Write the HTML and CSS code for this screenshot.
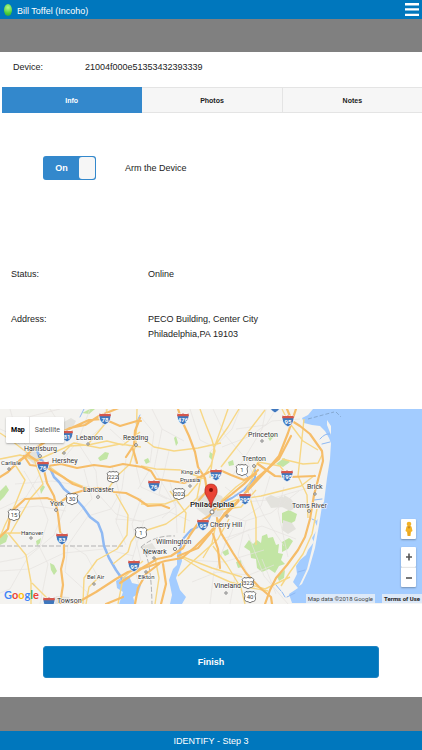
FILE: index.html
```html
<!DOCTYPE html>
<html lang="en">
<head>
  <meta charset="UTF-8">
  <meta name="viewport" content="width=device-width, initial-scale=1.0">
  <title>Identify - Step 3</title>
  <link rel="stylesheet" href="styles.css">
</head>
<body>
  <header class="header">
    <span class="status-dot"></span>
    <span class="user-name">Bill Toffel (Incoho)</span>
    <button class="menu-button" type="button" aria-label="Menu">
      <svg width="14" height="14" viewBox="0 0 14 14">
        <path d="M0 1.2h14M0 6.4h14M0 11.9h14" stroke="#fff" stroke-width="2.4"/>
      </svg>
    </button>
  </header>

  <main class="content">
    <div class="device-row">
      <span class="device-label">Device:</span>
      <span>21004f000e51353432393339</span>
    </div>

    <nav class="tabs">
      <button class="tab active" type="button">Info</button>
      <button class="tab" type="button">Photos</button>
      <button class="tab" type="button">Notes</button>
    </nav>

    <div class="arm-row">
      <label class="switch" for="arm">
        <input type="checkbox" id="arm" checked>
        <span class="switch-text">On</span>
        <span class="switch-knob"></span>
      </label>
      <label for="arm">Arm the Device</label>
    </div>

    <dl class="details">
      <dt>Status:</dt>
      <dd>Online</dd>
      <dt>Address:</dt>
      <dd>PECO Building, Center City<br>Philadelphia,PA 19103</dd>
    </dl>

    <section class="map" aria-label="Map">
      <svg class="map-canvas" viewBox="0 0 422 195" preserveAspectRatio="xMidYMid slice">
        <defs>
          <g id="interstate">
            <path d="M-5.5-5.5Q-3-4.500 0-5.500Q3-4.500 5.500-5.500Q7.500 2 0 6Q-7.500 2-5.500-5.500z" fill="#3f77bd" stroke="#fff" stroke-width=".8"/>
            <path d="M-5.500-5.500Q-3-4.500 0-5.500Q3-4.500 5.500-5.500L6-2.800H-6z" fill="#d5574c"/>
          </g>
          <g id="us-route">
            <path d="M-4-5.500Q-2-4.500 0-5.500Q2-4.500 4-5.500L5.800-3.500Q4.500-1 5.500 1Q6 4.500 2 4.700L0 5.800L-2 4.700Q-6 4.500-5.500 1Q-4.500-1-5.800-3.500z" fill="#fff" stroke="#555" stroke-width=".8"/>
          </g>
        </defs>

        <rect width="422" height="195" fill="#f4f3f0"/>

        <!-- parks -->
        <g fill="#c2e5a4">
          <path d="M0 82l6-6 3 5-5 7-4 4zM40 80l3-4 2 2-4 7zM98 49l7-6 4 1-2 6-7 2zM82 4l8-4 5 0-6 5zM36 132l5-3-1 5-3 3zM50 154l4 2 3 6-3 4-3-5z"/>
          <path d="M176 27l2 7-2 3-2-8zM144 51l4-2 2 4-4 2zM210 43l3 2-1 6-3-3zM228 53l5-2 1 5-5 1zM276 55l8-6 6 4-7 5zM268 29l5-5 3 1-6 7zM236 153l5-2 1 7-4 1z"/>
          <path d="M244 138l5-7 4 4 4-4 4 3 1-7 5-2 1 4 5-1 3 8 3-1-1 9 5 1-2 6 4 4-6 2-4 7-6-4-7 3-5-4-1-9-5-1-1-7zM282 104l7-3 8 4-2 7-7 4-6-2zM282 133l7-4 4 3-5 8-6 3zM277 167l8-6-1 8-5 3zM222 143l6-3 1 5-4 2zM0 125l5-3 3 5-2 6-6 3z"/>
        </g>

        <!-- built up areas and hills -->
        <g fill="#e3e2dd">
          <path d="M62 14l9-5 5 3-3 6-9 4zM265 89l6-3 7 3 4-2 5 5-4 6-12 1zM284 86l7 4 6 8-7 4-8-4zM283 111l9 3 4 6-8 5-6-4z"/>
          <path d="M24 46l8-7 7 4 5 8-10 4zM197 88l11-6 14 5 4 10-6 11-14-1-10-8zM140 138l12-4 4 6-8 7zM56 187l13 1 4 7H52z"/>
        </g>

        <!-- local roads -->
        <g fill="none" stroke="#e5e3e0" stroke-width=".7">
          <path d="M0 20l18 8 12 12M10 0l8 28M0 100l26-12 18-30M24 62l15 25 9 24-8 26-18 12-22 4M64 49l14-17 12-32M78 34l18 28 2 23 18 20 26 8M106 0l-4 18-13 11M110 20l22 20 9 38 26 12M141 8l13 16-4 30M152 0l10 20 22 12M162 20l-8 40 22 38 1 26M126 50l-4 30-11 20-23 7"/>
          <path d="M66 96l-12 30-26 22-18 32-10 4M38 135l10 20-8 40M0 162l30-2 34-16 40-4 30 7M88 107l-20 29-3 27 22 20-3 12M141 89l-9 26 9 37M115 110l28 2 27-9 20 9M144 111l-12 40 8 28-7 16"/>
          <path d="M213 0l12 26 22 25 7 17M240 0l-8 20-23 24M266 0l-4 20-18 30-12 17M276 0l-10 16-30 4M222 38l26-10 24-16 28-2M255 57l-5 20 14 30 20 30M270 67l-9 30-26 18-15 32M225 78l20 15 22-2 44-13M213 100l32 12 26-8 28-22M246 112l-8 34 12 23M222 130l40-13 34 13M188 151l36 2 40-12M192 173l25-10 32 3 25-10M210 195l4-33M230 195l5-28M288 195l-24-28-16-42"/>
          <path d="M14 28l14 20M50 0l15 23M20 10l40-10M0 50l24-4M15 75l37-3 38 6M84 60l8 30-22 24M112 57l9 34-5 22 10 23M8 100l30-3 28 5M70 136l16 10 14 26M150 60l-12 20M169 42l-10 43 20 10M170 73l6 24-14 12M190 0l10 31 16 8M250 120l-24 12-10 30M262 150l14 35M284 78l-6 24 10 46"/>
        </g>

        <path d="M0 137H123M141 138q14-12 34-11M141 138q10 7 11 57" fill="none" stroke="#aaa" stroke-width=".9" stroke-dasharray="5 2"/>

        <!-- water -->
        <g fill="#a3ccff">
          <path d="M313 0l-5 6-6 3 2 5 8 2 8 1 5 5 4 7 2 5-1 16-3 19-3 24-5 6 0 10-4 4 3 6-6 10 2 4-6 8-2 5-6 5-4 6 1 8-4 8 5 6-9 6 3 9H422V0z"/>
          <path d="M170 195l2-9-3-15 4-11 4-4 0-14 4-2 1 12-3 9-3 8 4 12 6 7-4 7z"/>
          <path d="M116 172l5-3 8-2 3 7 9 2-3 9-5 3 2 7H119l4-12-6-4z"/>
        </g>
        <g fill="none" stroke="#8fb9f3" stroke-linecap="round" stroke-linejoin="round">
          <path d="M37 41l3 9 10 9 4 9 5 5 5 7 11 9 8 9 7 10 8 6 4 10 2 13 5 12 7 12 7 10" stroke-width="2.500"/>
          <path d="M179 143l4-13 8-9 9-4 9-7 3-8 7-7 13-6 12-8 11-12 0-8" stroke-width="2"/>
          <path d="M320 30q5-6 10-5M322 35l8-2M313 76l9 1M314 91l8-1M312 110l4 2M298 163l7-2M287 188l8-4M84 0l-4 8M136 14l4-8M240 60l8 8M282 183l3 5M276 176l5 6" stroke-width="1"/>
        </g>
        <path d="M327 11l4 6 0 9-4-10zM322 97l-3 19-4 23-6 21-7 15-3 2 8-17 5-20 5-24 2-19z" fill="#f4f3f0"/>
        <path d="M308 10l26-7M336 3l5 5" fill="none" stroke="#789abd" stroke-width=".7" stroke-dasharray="4 2"/>

        <!-- secondary roads -->
        <g fill="none" stroke="#f7d785" stroke-width="1.400" stroke-linejoin="round">
          <path d="M0 50l20-4 15 5 9-3 20-9 10-5 26 5 20-4 21 3M0 24l12 8 18 14M62 45l8-8 18-1 19-4 16 4 17-13M106 83l11-16 13-12 6-20 1-35M107 0l-2 15-16 19M116 85l12 21-1 20-10 14-20 11-13 18-1 26"/>
          <path d="M14 54l11 17-10 25-10 20-5 12M8 124l18 22 5 27 0 22M32 174l21 21M4 124l24 0M34 50l9 25-13 15-20 35M43 53l25 18 20 9M141 28l13 10 20 4 24-3 23-5M200 0l4 11 8 20 3 11-4 14-8 12M228 0l-7 20-7 19-4 30M239 0l-11 18-14 20"/>
          <path d="M141 57l15 3 25 1 24 9M141 123l25-8 18-13 13-13 4-20M198 74l-10 12-23 9-24 0M170 82l16 22-2 20M258 53l-7 14-15 11-15 14M258 53l22 4 7 9M214 100l22-9 25-4 40-10 14-11M217 101l24-3 15-17M256 62l-9 17 9 30 0 27M213 137l14 19 14 23 4 16M181 148l20 12 29 13 22 6 16 3M178 167l13-13 27-24 11-20"/>
          <path d="M178 146l34 13 30 9M217 110l-5 24-9 15M241 173l24 7 25-12M282 0l6 12 15 20 15 9M282 50l21 5 15-1 4-8M304 10l-6 57 9 19 1 23M317 100l-5 25-9 20-13 18-9 14M155 149l4 20-4 26M221 58l21-27 23-30"/>
          <path d="M118 195l5-26 20-17M140 120l-9 13-3 10-15 12M86 195l3-17 12-12"/>
        </g>

        <!-- highways -->
        <g fill="none" stroke="#f6bd69" stroke-width="2.200" stroke-linejoin="round" stroke-linecap="round">
          <path d="M0 68l8-5 12-12 8-5 11 7 9 4 13-2 16 4 17-3 16 2 13-3 19 3 9 4 5 8 15 2 13 2 9-3 7-3 9-5 13-1 9 4 13 5 12-6"/>
          <path d="M18 54l13-12 14-9 11-7 14-7 15-3 14-9 22-9M69 20l20-9 15-1 16 7 17-5 4 0"/>
          <path d="M43 57l4 17 7 13 4 18 2 17 4 14 0 12-3 12 2 16-3 19"/>
          <path d="M0 128l8-8 3-17 14-13 22-1 12 5 13-9 16-5 11-1 15 4 12 1 12 6 10 7 13-1 8 3M24 47l6 9 16 2 17 10 10 7 14 5"/>
          <path d="M178 0l4 12 7 15 6 16 3 15 7 11 2 13-8 9"/>
          <path d="M75 195l21-12 20-13 12-7 14-4 15-9 14-3 12-8 7-13 9-13 10-6 9-11 14-11 12-10 14-14"/>
          <path d="M120 174l21-14 24-8 17-3 13-11 16-16 11-13 13-13 14-16 17-18 13-15 9-23 8-24"/>
          <path d="M178 147l20-8 15-18 12-17 15-14 18-22 21-18 12-23M258 55l17 12 15 1 25-1"/>
          <path d="M287 0l5 12 8 5 10 8 12 17 1 10-4 15-5 19-4 24-5 18-7 13-11 15-11 13-6 12-5 14"/>
          <path d="M217 109l4 15 12 20 13 20 13 14 12 10 1 7M213 125l5 15 2 19M163 155l3 20-5 20"/>
          <path d="M135 195l3-16 8-14 13-10M106 195l17-7M133 40l4 14M126 48l8-12 1-14 5-13"/>
        </g>

        <!-- road shields -->
        <use href="#interstate" x="105" y="10"/>
        <use href="#interstate" x="67" y="27"/>
        <use href="#interstate" x="43" y="58"/>
        <use href="#interstate" x="183" y="10"/>
        <use href="#interstate" x="216" y="66"/>
        <use href="#interstate" x="154" y="77"/>
        <use href="#interstate" x="245" y="90"/>
        <use href="#interstate" x="288" y="12"/>
        <use href="#interstate" x="287" y="67"/>
        <use href="#interstate" x="62" y="130"/>
        <use href="#interstate" x="203" y="116"/>
        <use href="#interstate" x="134" y="157"/>
        <use href="#interstate" x="49" y="194"/>
        <use href="#interstate" x="275" y="-2"/>
        <use href="#us-route" x="113" y="68"/>
        <use href="#us-route" x="72" y="90"/>
        <use href="#us-route" x="179" y="85"/>
        <use href="#us-route" x="242" y="61"/>
        <use href="#us-route" x="14" y="106"/>
        <use href="#us-route" x="141" y="124"/>
        <use href="#us-route" x="248" y="174"/>
        <use href="#us-route" x="250" y="188"/>
        <g class="shield-text">
          <text x="105" y="13">78</text>
          <text x="67" y="30">81</text>
          <text x="43" y="61">76</text>
          <text x="183" y="13">476</text>
          <text x="216" y="69">276</text>
          <text x="154" y="80">76</text>
          <text x="245" y="93">295</text>
          <text x="288" y="15">95</text>
          <text x="287" y="70">195</text>
          <text x="62" y="133">83</text>
          <text x="203" y="119">95</text>
          <text x="134" y="160">95</text>
        </g>
        <g class="shield-text dark">
          <text x="113" y="70">222</text>
          <text x="72" y="92">30</text>
          <text x="179" y="87">202</text>
          <text x="242" y="63">1</text>
          <text x="14" y="108">15</text>
          <text x="141" y="126">1</text>
          <text x="248" y="176">322</text>
          <text x="250" y="190">40</text>
        </g>

        <!-- town markers -->
        <g fill="#fff" stroke="#666" stroke-width=".8">
          <circle cx="40" cy="47" r="1.400"/><circle cx="64" cy="44" r="1.200"/>
          <circle cx="9" cy="60" r="1.200"/><circle cx="88" cy="35" r="1.200"/>
          <circle cx="136" cy="36" r="1.400"/><circle cx="98" cy="88" r="1.400"/>
          <circle cx="56" cy="101" r="1.400"/><circle cx="31" cy="129" r="1.200"/>
          <circle cx="94" cy="175" r="1.200"/><circle cx="190" cy="77" r="1.200"/>
          <circle cx="262" cy="32" r="1.200"/><circle cx="254" cy="57" r="1.400"/>
          <circle cx="315" cy="85" r="1.200"/><circle cx="309" cy="102" r="1.400"/>
          <circle cx="212" cy="103" r="2"/><circle cx="227" cy="107" r="1.200"/>
          <circle cx="175" cy="140" r="1.600"/><circle cx="154" cy="149" r="1.200"/>
          <circle cx="146" cy="163" r="1.200"/><circle cx="226" cy="184" r="1.200"/>
        </g>

        <!-- town names -->
        <g class="town">
          <text x="24" y="42">Harrisburg</text>
          <text x="76" y="31">Lebanon</text>
          <text x="123" y="31">Reading</text>
          <text x="52" y="54">Hershey</text>
          <text x="83" y="83">Lancaster</text>
          <text x="50" y="97">York</text>
          <text x="248" y="28">Princeton</text>
          <text x="242" y="52">Trenton</text>
          <text x="307" y="80">Brick</text>
          <text x="292" y="99">Toms River</text>
          <text x="210" y="118">Cherry Hill</text>
          <text x="156" y="135">Wilmington</text>
          <text x="143" y="145">Newark</text>
          <text x="214" y="179">Vineland</text>
          <text x="57" y="194">Towson</text>
        </g>
        <g class="town small">
          <text x="1" y="56">Carlisle</text>
          <text x="181" y="65">King of</text>
          <text x="180" y="73">Prussia</text>
          <text x="21" y="126">Hanover</text>
          <text x="87" y="170">Bel Air</text>
          <text x="138" y="170">Elkton</text>
        </g>
        <text class="town city" x="190" y="98">Philadelphia</text>

        <path d="M211 99q-1-7-4-11-3-4-2-8 1-5 6-5t6 5q1 4-2 8-3 4-4 11z" fill="#ea4335" stroke="#a52714" stroke-width=".6"/>
        <circle cx="211" cy="81" r="2" fill="#7c0d08"/>
      </svg>

      <div class="map-type">
        <button class="map-type-button selected" type="button">Map</button>
        <button class="map-type-button" type="button">Satellite</button>
      </div>

      <div class="map-controls">
        <button class="map-control" type="button" aria-label="Street View">
          <svg width="8" height="16" viewBox="0 0 8 16">
            <circle cx="4" cy="3" r="2.300" fill="#f3b328"/>
            <path d="M1.500 5.500h5L7.500 10 6 11l-.5 4h-3L2 11 .5 10z" fill="#f3b328"/>
            <path d="M2.500 5.500h3L4 7.500zM4 10.500V15" fill="#c98717" stroke="#c98717" stroke-width=".5"/>
          </svg>
        </button>
        <div class="zoom">
          <button class="map-control" type="button" aria-label="Zoom in">
            <svg width="6" height="8" viewBox="0 0 6 8"><path d="M0 4h6M3 .5v7" stroke="#555" stroke-width="1.600"/></svg>
          </button>
          <button class="map-control" type="button" aria-label="Zoom out">
            <svg width="6" height="8" viewBox="0 0 6 8"><path d="M0 4h6" stroke="#555" stroke-width="1.600"/></svg>
          </button>
        </div>
      </div>

      <div class="map-logo"><span class="blue">G</span><span class="red">o</span><span class="yellow">o</span><span class="blue">g</span><span class="green">l</span><span class="red">e</span></div>

      <div class="map-credits">
        <span>Map data ©2018 Google</span>
        <a href="#terms">Terms of Use</a>
      </div>
    </section>

    <button class="finish-button" type="button">Finish</button>
  </main>

  <footer class="footer">IDENTIFY - Step 3</footer>
</body>
</html>
```

FILE: styles.css
```css
* {
  box-sizing: border-box;
}
body {
  margin: 0;
  min-height: 100vh;
  display: flex;
  flex-direction: column;
  background-color: #808080;
  color: #222;
  font-family: "Liberation Sans", Arial, sans-serif;
  font-size: 9px;
  line-height: 15px;
}
button {
  margin: 0;
  padding: 0;
  border: 0;
  font: inherit;
  color: inherit;
  cursor: pointer;
}
svg {
  display: block;
}

/* Header and footer bars */
.header {
  display: flex;
  align-items: center;
  height: 19px;
  padding: 0 3px 0 4px;
  background-color: #0077bd;
  color: #fff;
}
.status-dot {
  width: 8px;
  height: 12px;
  margin-right: 5px;
  border-radius: 50%;
  background: radial-gradient(circle at 50% 30%, #b4f78e, #4cd137 60%, #2f9e3a);
}
.user-name {
  flex: 1;
  padding-top: 3px;
}
.menu-button {
  background: none;
}
.footer {
  margin-top: auto;
  height: 19px;
  padding-top: 3px;
  background-color: #0077bd;
  color: #fff;
  text-align: center;
}

.content {
  display: flex;
  flex-direction: column;
  margin-top: 33px;
  padding-bottom: 19px;
  background-color: #fff;
}
.device-row {
  display: flex;
  padding: 8px 13px 12px;
}
.device-label {
  width: 72px;
}

/* Tabs */
.tabs {
  display: flex;
  height: 26px;
  margin-left: 2px;
}
.tab {
  flex: 1;
  border: 1px solid #e4e4e4;
  border-left-width: 0;
  background-color: #f6f6f6;
  font-size: 7px;
  font-weight: bold;
}
.tab:last-child {
  border-right-width: 0;
}
.tab.active {
  border-color: #3388cc;
  background-color: #3388cc;
  color: #fff;
}

/* Arm switch */
.arm-row {
  display: flex;
  align-items: center;
  gap: 29px;
  margin: 43px 43px 0;
}
.switch {
  position: relative;
  display: flex;
  width: 53px;
  height: 24px;
  padding: 1px;
  border-radius: 3px;
  background-color: #3388cc;
  color: #fff;
  font-weight: bold;
  cursor: pointer;
}
.switch input {
  position: absolute;
  inset: 0;
  margin: 0;
  opacity: 0;
}
.switch-text {
  flex: 1;
  line-height: 22px;
  text-align: center;
}
.switch-knob {
  width: 16px;
  border-radius: 3px;
  background-color: #f6f6f6;
}

/* Status and address */
.details {
  display: grid;
  grid-template-columns: 137px 1fr;
  row-gap: 30px;
  margin: 87px 11px 67px;
}
.details dd {
  margin: 0;
}

/* Map */
.map {
  position: relative;
  height: 195px;
  overflow: hidden;
  font-family: Roboto, "Liberation Sans", sans-serif;
}
.map-canvas {
  width: 100%;
  height: 100%;
}
.town {
  font-size: 7px;
  fill: #333;
  stroke: #fff;
  stroke-width: 1px;
  paint-order: stroke;
}
.town.small {
  font-size: 6px;
}
.town.city {
  font-size: 8px;
  font-weight: 500;
  fill: #111;
}
.shield-text {
  font-size: 6px;
  font-weight: bold;
  text-anchor: middle;
  fill: #fff;
}
.shield-text.dark {
  font-weight: normal;
  fill: #444;
}
.map-type {
  position: absolute;
  top: 8px;
  left: 6px;
  display: flex;
  height: 26px;
  border-radius: 1px;
  background-color: #fff;
  box-shadow: 0 1px 2px rgba(0, 0, 0, 0.3);
}
.map-type-button {
  padding: 0 4px 0 5px;
  background: none;
  color: #565656;
  font-size: 7px;
}
.map-type-button.selected {
  border-right: 1px solid #e6e6e6;
  color: #000;
  font-weight: bold;
}
.map-controls {
  position: absolute;
  right: 6px;
  bottom: 17px;
  display: flex;
  flex-direction: column;
  gap: 8px;
}
.map-control {
  display: flex;
  align-items: center;
  justify-content: center;
  width: 15px;
  height: 20px;
  border-radius: 1px;
  background-color: #fff;
  box-shadow: 0 1px 2px rgba(0, 0, 0, 0.3);
}
.zoom .map-control + .map-control {
  border-top: 1px solid #e6e6e6;
}
.map-logo {
  position: absolute;
  left: 4px;
  bottom: 2px;
  font-family: Lato, sans-serif;
  font-size: 11px;
  font-weight: bold;
  text-shadow: 0 0 1px #fff;
}
.blue {
  color: #4285f4;
}
.red {
  color: #ea4335;
}
.yellow {
  color: #fbbc05;
}
.green {
  color: #34a853;
}
.map-credits {
  position: absolute;
  right: 0;
  bottom: 0;
  display: flex;
  gap: 7px;
  color: #444;
  font-size: 6px;
  line-height: 10px;
}
.map-credits > * {
  padding: 0 2px;
  background-color: rgba(245, 245, 245, 0.7);
}
.map-credits a {
  color: #222;
  font-weight: bold;
  text-decoration: none;
}

.finish-button {
  height: 32px;
  margin: 42px 43px 0;
  border: 1px solid #1f83c2;
  border-radius: 3px;
  background-color: #0077bd;
  color: #fff;
  font-weight: bold;
}
```
